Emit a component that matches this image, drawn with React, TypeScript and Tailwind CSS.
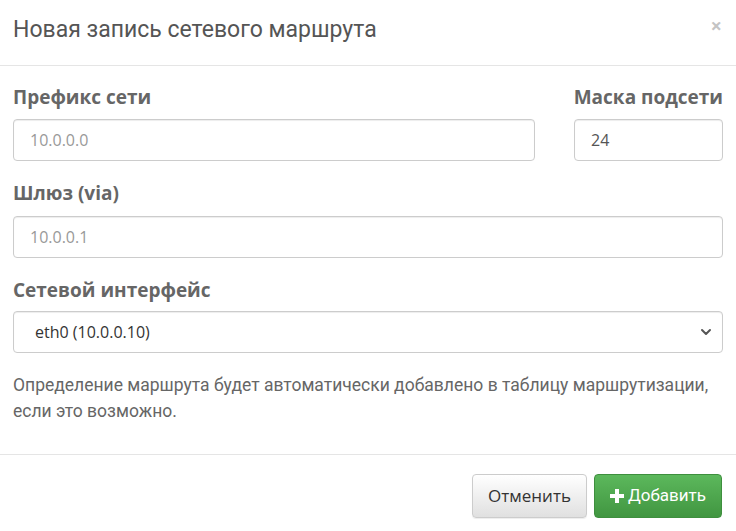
import { ChevronDown } from "lucide-react";

const labelCls = "block whitespace-nowrap text-[19px] font-bold text-[#666] leading-[19px]";
const inputCls =
  "w-full h-[42px] rounded-[4px] border border-[#ccc] bg-white px-[16px] text-[16px] text-[#555] placeholder:text-[#999] outline-none shadow-[inset_0_1px_1px_rgba(0,0,0,0.075)]";

export default function App() {
  return (
    <div className="w-[736px] h-[531px] bg-white font-['Open_Sans',sans-serif] overflow-hidden">
      {/* Header */}
      <div className="h-[66px] flex items-center justify-between pl-[13px] pr-[14px] border-b border-[#e5e5e5]">
        <h4 className="font-['Roboto',sans-serif] text-[23px] text-[#555] -mt-[4px]">
          Новая запись сетевого маршрута
        </h4>
        <button className="text-[#c4c4c4] text-[20px] font-bold leading-none -mt-[14px]">×</button>
      </div>

      {/* Body */}
      <div className="px-[13px] pt-[22px]">
        <div className="flex gap-[39px]">
          <div className="flex-1">
            <label className={labelCls}>Префикс сети</label>
            <input className={`${inputCls} mt-[12px]`} placeholder="10.0.0.0" />
          </div>
          <div className="w-[149px] flex flex-col items-end">
            <label className={labelCls}>Маска подсети</label>
            <input className={`${inputCls} mt-[12px]`} defaultValue="24" />
          </div>
        </div>

        <div className="mt-[23px]">
          <label className={labelCls}>Шлюз (via)</label>
          <input className={`${inputCls} mt-[13px]`} placeholder="10.0.0.1" />
        </div>

        <div className="mt-[23px]">
          <label className={labelCls}>Сетевой интерфейс</label>
          <div className="relative mt-[11px] h-[42px] rounded-[4px] border border-[#ccc] bg-white pl-[21px] flex items-center text-[16px] text-[#333] shadow-[inset_0_1px_1px_rgba(0,0,0,0.075)]">
            eth0 (10.0.0.10)
            <ChevronDown
              size={16}
              strokeWidth={3}
              className="absolute right-[8px] top-[12px] text-[#555]"
            />
          </div>
        </div>

        <p className="mt-[19px] font-['Roboto',sans-serif] text-[17.5px] leading-[26px] text-[#666]">
          Определение маршрута будет автоматически добавлено в таблицу маршрутизации,
          <br />
          если это возможно.
        </p>
      </div>

      {/* Footer */}
      <div className="mt-[30px] border-t border-[#e5e5e5] flex justify-end gap-[7px] px-[14px] pt-[19px]">
        <button className="h-[44px] px-[15px] rounded-[4px] border border-[#ccc] bg-gradient-to-b from-white to-[#e0e0e0] text-[17px] text-[#333] shadow-[inset_0_1px_0_rgba(255,255,255,0.15),0_1px_1px_rgba(0,0,0,0.075)]">
          Отменить
        </button>
        <button className="h-[44px] px-[15px] rounded-[4px] border border-[#3e8f3e] bg-gradient-to-b from-[#5cb85c] to-[#419641] text-white text-[17px] font-['Roboto',sans-serif] flex items-center gap-[4px]">
          <svg width="14" height="14" viewBox="0 0 14 14" className="fill-white">
            <rect x="5" y="0" width="4" height="14" />
            <rect x="0" y="5" width="14" height="4" />
          </svg>
          Добавить
        </button>
      </div>
    </div>
  );
}
